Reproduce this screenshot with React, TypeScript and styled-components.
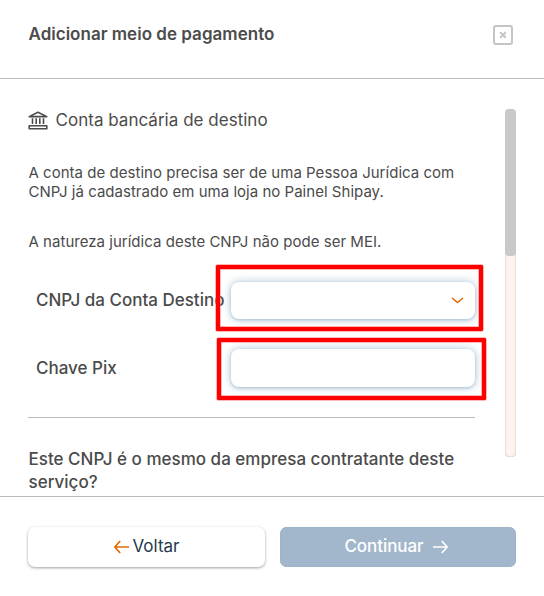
import React from "react";
import styled, { createGlobalStyle } from "styled-components";

const GlobalStyle = createGlobalStyle`
  *, *::before, *::after { box-sizing: border-box; }
  body {
    margin: 0;
    background: #fff;
    font-family: Inter, "Liberation Sans", sans-serif;
    color: #4b4b4b;
  }
  p, h1, h2, h3 { margin: 0; }
`;

const Dialog = styled.main`
  width: 544px;
  height: 596px;
  display: flex;
  flex-direction: column;
  overflow: hidden;
  background: #fff;
`;

const Header = styled.header`
  height: 79px;
  flex: none;
  display: flex;
  justify-content: space-between;
  align-items: flex-start;
  padding: 24px 31px 0 28.5px;
  border-bottom: 1px solid #b9b9b9;
`;

const Title = styled.h1`
  font-size: 17px;
  line-height: 20px;
  font-weight: 600;
  letter-spacing: 0.02px;
`;

const CloseButton = styled.button`
  width: 20px;
  height: 20px;
  margin-top: 1px;
  padding: 0;
  border: 0;
  background: none;
  svg { display: block; }
`;

const Body = styled.section`
  height: 417px;
  flex: none;
  display: flex;
  justify-content: space-between;
  padding: 30px 28px 0;
  overflow: hidden;
`;

const Content = styled.div`
  width: 447px;
  flex: none;
`;

const SectionTitle = styled.h2`
  height: 22px;
  display: flex;
  align-items: center;
  gap: 7.5px;
  font-size: 17px;
  font-weight: 400;
  line-height: 22px;
  letter-spacing: 0.02px;
  white-space: nowrap;
  svg { flex: none; margin-top: 1px; }
`;

const Paragraph = styled.p<{ $top: number }>`
  margin-top: ${(p) => p.$top}px;
  padding-left: 0.5px;
  font-size: 15px;
  line-height: 19px;
  letter-spacing: 0.025px;
  white-space: nowrap;
`;

const Field = styled.div<{ $top: number; $height: number }>`
  margin-top: ${(p) => p.$top}px;
  height: ${(p) => p.$height}px;
  padding-left: 8px;
  display: grid;
  grid-template-columns: 195px 244px;
`;

const Label = styled.label<{ $top: number }>`
  padding-top: ${(p) => p.$top}px;
  font-size: 17px;
  line-height: 20px;
  font-weight: 500;
  letter-spacing: -0.01px;
  white-space: nowrap;
`;

const Control = styled.div`
  position: relative;
  height: 100%;
  display: flex;
  align-items: center;
  justify-content: flex-end;
  padding-right: 11px;
  border-radius: 8px;
  background: #fff;
  box-shadow: 0 1px 3px rgba(140, 165, 185, 0.55), 0 0 10px rgba(140, 175, 202, 0.7);
`;

const Highlight = styled.span<{ $top: number; $left: number; $width: number; $height: number }>`
  position: absolute;
  top: ${(p) => p.$top}px;
  left: ${(p) => p.$left}px;
  width: ${(p) => p.$width}px;
  height: ${(p) => p.$height}px;
  border: 4px solid #fe0000;
  border-radius: 1px;
  box-shadow: 0 0 0 0.5px #ff7070, inset 0 0 0 0.5px #ff7070;
  pointer-events: none;
`;

const Divider = styled.hr`
  height: 1px;
  margin: 30px 0 0;
  border: 0;
  background: #b9b9b9;
`;

const Question = styled.h3`
  margin-top: 30px;
  padding-left: 0.5px;
  font-size: 17px;
  line-height: 23px;
  font-weight: 500;
  letter-spacing: 0.01px;
  white-space: nowrap;
`;

const ScrollTrack = styled.div`
  width: 11px;
  height: 348px;
  border-radius: 4px;
  background: #fef4ef;
  box-shadow: inset 0 0 2px #b8aaa2;
  overflow: hidden;
`;

const ScrollThumb = styled.div`
  height: 147px;
  border-radius: 4px;
  background: #c9c9c9;
`;

const Footer = styled.footer`
  height: 100px;
  flex: none;
  display: grid;
  grid-template-columns: 237px 236px;
  gap: 15px;
  align-items: start;
  padding: 30px 28px 0;
  border-top: 1px solid #b9b9b9;
`;

const Button = styled.button<{ $primary?: boolean }>`
  height: 40px;
  display: flex;
  align-items: center;
  justify-content: center;
  gap: ${(p) => (p.$primary ? 9 : 3)}px;
  padding: ${(p) => (p.$primary ? "0 4px 2px 0" : "0 0 2px 1px")};
  border: 0;
  border-radius: 7px;
  font-family: inherit;
  font-size: 17px;
  font-weight: ${(p) => (p.$primary ? 550 : 400)};
  letter-spacing: ${(p) => (p.$primary ? "-0.06px" : "0")};
  color: ${(p) => (p.$primary ? "#fff" : "#24394d")};
  background: ${(p) => (p.$primary ? "#a2b7cc" : "#fff")};
  box-shadow: ${(p) => (p.$primary ? "inset 0 0 0 1px #9db3c6" : "0 1px 3px rgba(0, 0, 0, 0.38)")};
  svg { position: relative; top: 1px; }
`;

const CloseIcon = () => (
  <svg width="20" height="20" viewBox="0 0 20 20" fill="none" stroke="#c5c5c5">
    <rect x="1" y="1" width="18" height="18" rx="2" strokeWidth="2" />
    <path d="M7.200 7.200l5.600 5.600M12.800 7.200l-5.600 5.600" strokeWidth="2" />
  </svg>
);

const BankIcon = () => (
  <svg width="20" height="19" viewBox="0 0 20 19" fill="none" stroke="#4b4b4b">
    <path d="M1.200 5.600L10 1.300l8.800 4.300z" strokeWidth="1.600" strokeLinejoin="round" />
    <path d="M4.500 7.200v5.800M8.200 7.200v5.800M11.800 7.200v5.800M15.500 7.200v5.800" strokeWidth="1.600" />
    <path d="M1.200 17.700v-3h17.600v3z" strokeWidth="1.600" strokeLinejoin="round" />
  </svg>
);

const ChevronIcon = () => (
  <svg width="13" height="7" viewBox="0 0 13 7" fill="none" stroke="#e06900" strokeWidth="1.6">
    <path d="M1 1l5.500 4.500L12 1" />
  </svg>
);

const ArrowIcon = ({ color, right = false }: { color: string; right?: boolean }) => (
  <svg width="15" height="14" viewBox="0 0 15 14" fill="none" stroke={color} strokeWidth="1.7">
    <path
      d={right ? "M0 7h14M8.800 1l5.400 6-5.400 6" : "M15 7H1M6.200 1L.8 7l5.400 6"}
      strokeLinejoin="round"
    />
  </svg>
);

export default function App() {
  return (
    <>
      <GlobalStyle />
      <Dialog>
        <Header>
          <Title>Adicionar meio de pagamento</Title>
          <CloseButton aria-label="Fechar">
            <CloseIcon />
          </CloseButton>
        </Header>
        <Body>
          <Content>
            <SectionTitle>
              <BankIcon />
              Conta bancária de destino
            </SectionTitle>
            <Paragraph $top={32}>
              A conta de destino precisa ser de uma Pessoa Jurídica com
              <br />
              CNPJ já cadastrado em uma loja no Painel Shipay.
            </Paragraph>
            <Paragraph $top={31}>A natureza jurídica deste CNPJ não pode ser MEI.</Paragraph>
            <Field $top={31} $height={37}>
              <Label $top={8}>CNPJ da Conta Destino</Label>
              <Control>
                <ChevronIcon />
                <Highlight $top={-17} $left={-15} $width={267} $height={66} />
              </Control>
            </Field>
            <Field $top={30} $height={38}>
              <Label $top={9}>Chave Pix</Label>
              <Control>
                <Highlight $top={-11} $left={-14} $width={269} $height={62} />
              </Control>
            </Field>
            <Divider />
            <Question>
              Este CNPJ é o mesmo da empresa contratante deste
              <br />
              serviço?
            </Question>
          </Content>
          <ScrollTrack>
            <ScrollThumb />
          </ScrollTrack>
        </Body>
        <Footer>
          <Button>
            <ArrowIcon color="#e06900" />
            Voltar
          </Button>
          <Button $primary>
            Continuar
            <ArrowIcon color="#fff" right />
          </Button>
        </Footer>
      </Dialog>
    </>
  );
}
